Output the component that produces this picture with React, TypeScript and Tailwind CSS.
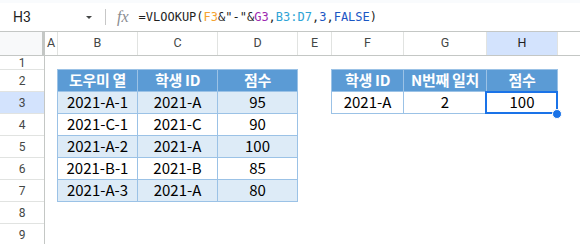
import React from 'react';

const colLetters = ['A', 'B', 'C', 'D', 'E', 'F', 'G', 'H'];
const colWidths = ['w-[13px]', 'w-[80px]', 'w-[80px]', 'w-[80px]', 'w-[34px]', 'w-[72px]', 'w-[83px]', 'w-[71px]'];

const cellFont = { fontFamily: '"Noto Sans CJK KR", "Noto Sans", sans-serif' };

const leftRows = [
  ['2021-A-1', '2021-A', '95'],
  ['2021-C-1', '2021-C', '90'],
  ['2021-A-2', '2021-A', '100'],
  ['2021-B-1', '2021-B', '85'],
  ['2021-A-3', '2021-A', '80'],
];

const FormulaBar: React.FC = () => (
  <div className="h-[31px] flex flex-col">
    <div className="h-[3px] bg-[#f9fbfd]" />
    <div className="flex-1 flex items-center bg-white">
      <span className="ml-[13px] w-[66px] text-[14px] text-[#1f1f1f]" style={{ fontFamily: 'Roboto, sans-serif' }}>
        H3
      </span>
      <span className="ml-[7px] w-0 h-0 border-l-[3px] border-r-[3px] border-t-[3px] border-l-transparent border-r-transparent border-t-[#444746]" />
      <span className="ml-[13px] w-px h-[16px] bg-[#c7c7c7]" />
      <span className="ml-[11px] text-[16px] italic text-[#8a8d91]" style={{ fontFamily: '"Liberation Serif", serif' }}>
        fx
      </span>
      <span className="ml-[10px] text-[12px] text-[#1f1f1f] whitespace-pre" style={{ fontFamily: '"DejaVu Sans Mono", monospace' }}>
        =VLOOKUP(<span className="text-[#f5a331]">F3</span>&amp;"-"&amp;<span className="text-[#9c27b0]">G3</span>,<span className="text-[#2ea3d6]">B3:D7</span>,<span className="text-[#1a56c4]">3</span>,<span className="text-[#1a56c4]">FALSE</span>)
      </span>
    </div>
  </div>
);

const ColumnHeaders: React.FC = () => (
  <div className="flex h-[25px] border-t border-b border-[#c4c7c5] bg-white" style={{ fontFamily: 'Roboto, sans-serif' }}>
    <div className="w-[45px] bg-[#f8f9fa] border-r-[3px] border-[#c4c7c5]" />
    {colLetters.map((c, i) => (
      <div
        key={c}
        className={`${colWidths[i]} flex items-center justify-center border-r border-[#e1e3e1] text-[12.5px] ${
          c === 'H' ? 'bg-[#d3e3fd] text-[#1f1f1f]' : 'text-[#444746]'
        }`}
      >
        {c}
      </div>
    ))}
    <div className="flex-1" />
  </div>
);

const RowNumbers: React.FC = () => (
  <div className="w-[45px] border-r border-[#c4c7c5] text-[12px] text-[#444746]" style={{ fontFamily: 'Roboto, sans-serif' }}>
    <div className="h-[14px] border-b border-[#e1e3e1] flex items-center justify-center leading-none">1</div>
    {[2, 3, 4, 5, 6, 7, 8, 9].map((n) => (
      <div
        key={n}
        className={`h-[22px] border-b border-[#e1e3e1] flex items-center justify-center ${n === 3 ? 'bg-[#d3e3fd]' : ''}`}
      >
        {n}
      </div>
    ))}
  </div>
);

const HeadCell: React.FC<{ w: string; children: React.ReactNode }> = ({ w, children }) => (
  <div className={`${w} h-[22px] flex items-center justify-center bg-[#5b9bd5] text-white font-bold text-[15px] border-r border-b border-[#9bc2e6] whitespace-nowrap tracking-[-0.3px]`}>
    {children}
  </div>
);

const DataCell: React.FC<{ w: string; shade: boolean; children: React.ReactNode }> = ({ w, shade, children }) => (
  <div
    className={`${w} h-[22px] flex items-center justify-center text-[15px] text-black border-r border-b border-[#9bc2e6] ${
      shade ? 'bg-[#ddebf7]' : 'bg-white'
    }`}
  >
    {children}
  </div>
);

export default function App() {
  return (
    <div className="w-[580px] h-[244px] overflow-hidden bg-white">
      <FormulaBar />
      <ColumnHeaders />
      <div className="flex">
        <RowNumbers />
        <div className="relative flex-1 grid grid-cols-[13px_80px_80px_80px_34px_72px_83px_71px_1fr] grid-rows-[14px_repeat(8,22px)]" style={cellFont}>
          <div className="col-start-2 col-span-3 row-start-2 row-span-6 -ml-px -mt-px self-start flex flex-col border-l border-t border-[#9bc2e6] w-[241px]">
            <div className="flex">
              <HeadCell w="w-[80px]">도우미 열</HeadCell>
              <HeadCell w="w-[80px]">학생 ID</HeadCell>
              <HeadCell w="w-[80px]">점수</HeadCell>
            </div>
            {leftRows.map((r, i) => (
              <div key={i} className="flex">
                {r.map((v, j) => (
                  <DataCell key={j} w="w-[80px]" shade={i % 2 === 0}>
                    {v}
                  </DataCell>
                ))}
              </div>
            ))}
          </div>

          <div className="col-start-6 col-span-3 row-start-2 row-span-2 -ml-px -mt-px self-start flex flex-col border-l border-t border-[#9bc2e6] w-[227px]">
            <div className="flex">
              <HeadCell w="w-[72px]">학생 ID</HeadCell>
              <HeadCell w="w-[83px]">N번째 일치</HeadCell>
              <HeadCell w="w-[71px]">점수</HeadCell>
            </div>
            <div className="flex">
              <DataCell w="w-[72px]" shade={false}>2021-A</DataCell>
              <DataCell w="w-[83px]" shade={false}>2</DataCell>
              <DataCell w="w-[71px]" shade={false}>100</DataCell>
            </div>
          </div>

          {/* selection on H3 */}
          <div className="absolute left-[440px] top-[35px] w-[73px] h-[23px] border-2 border-[#1a73e8] pointer-events-none" />
          <div className="absolute left-[507px] top-[53px] w-[10px] h-[10px] rounded-full bg-[#1a73e8] border border-white" />
        </div>
      </div>
    </div>
  );
}
